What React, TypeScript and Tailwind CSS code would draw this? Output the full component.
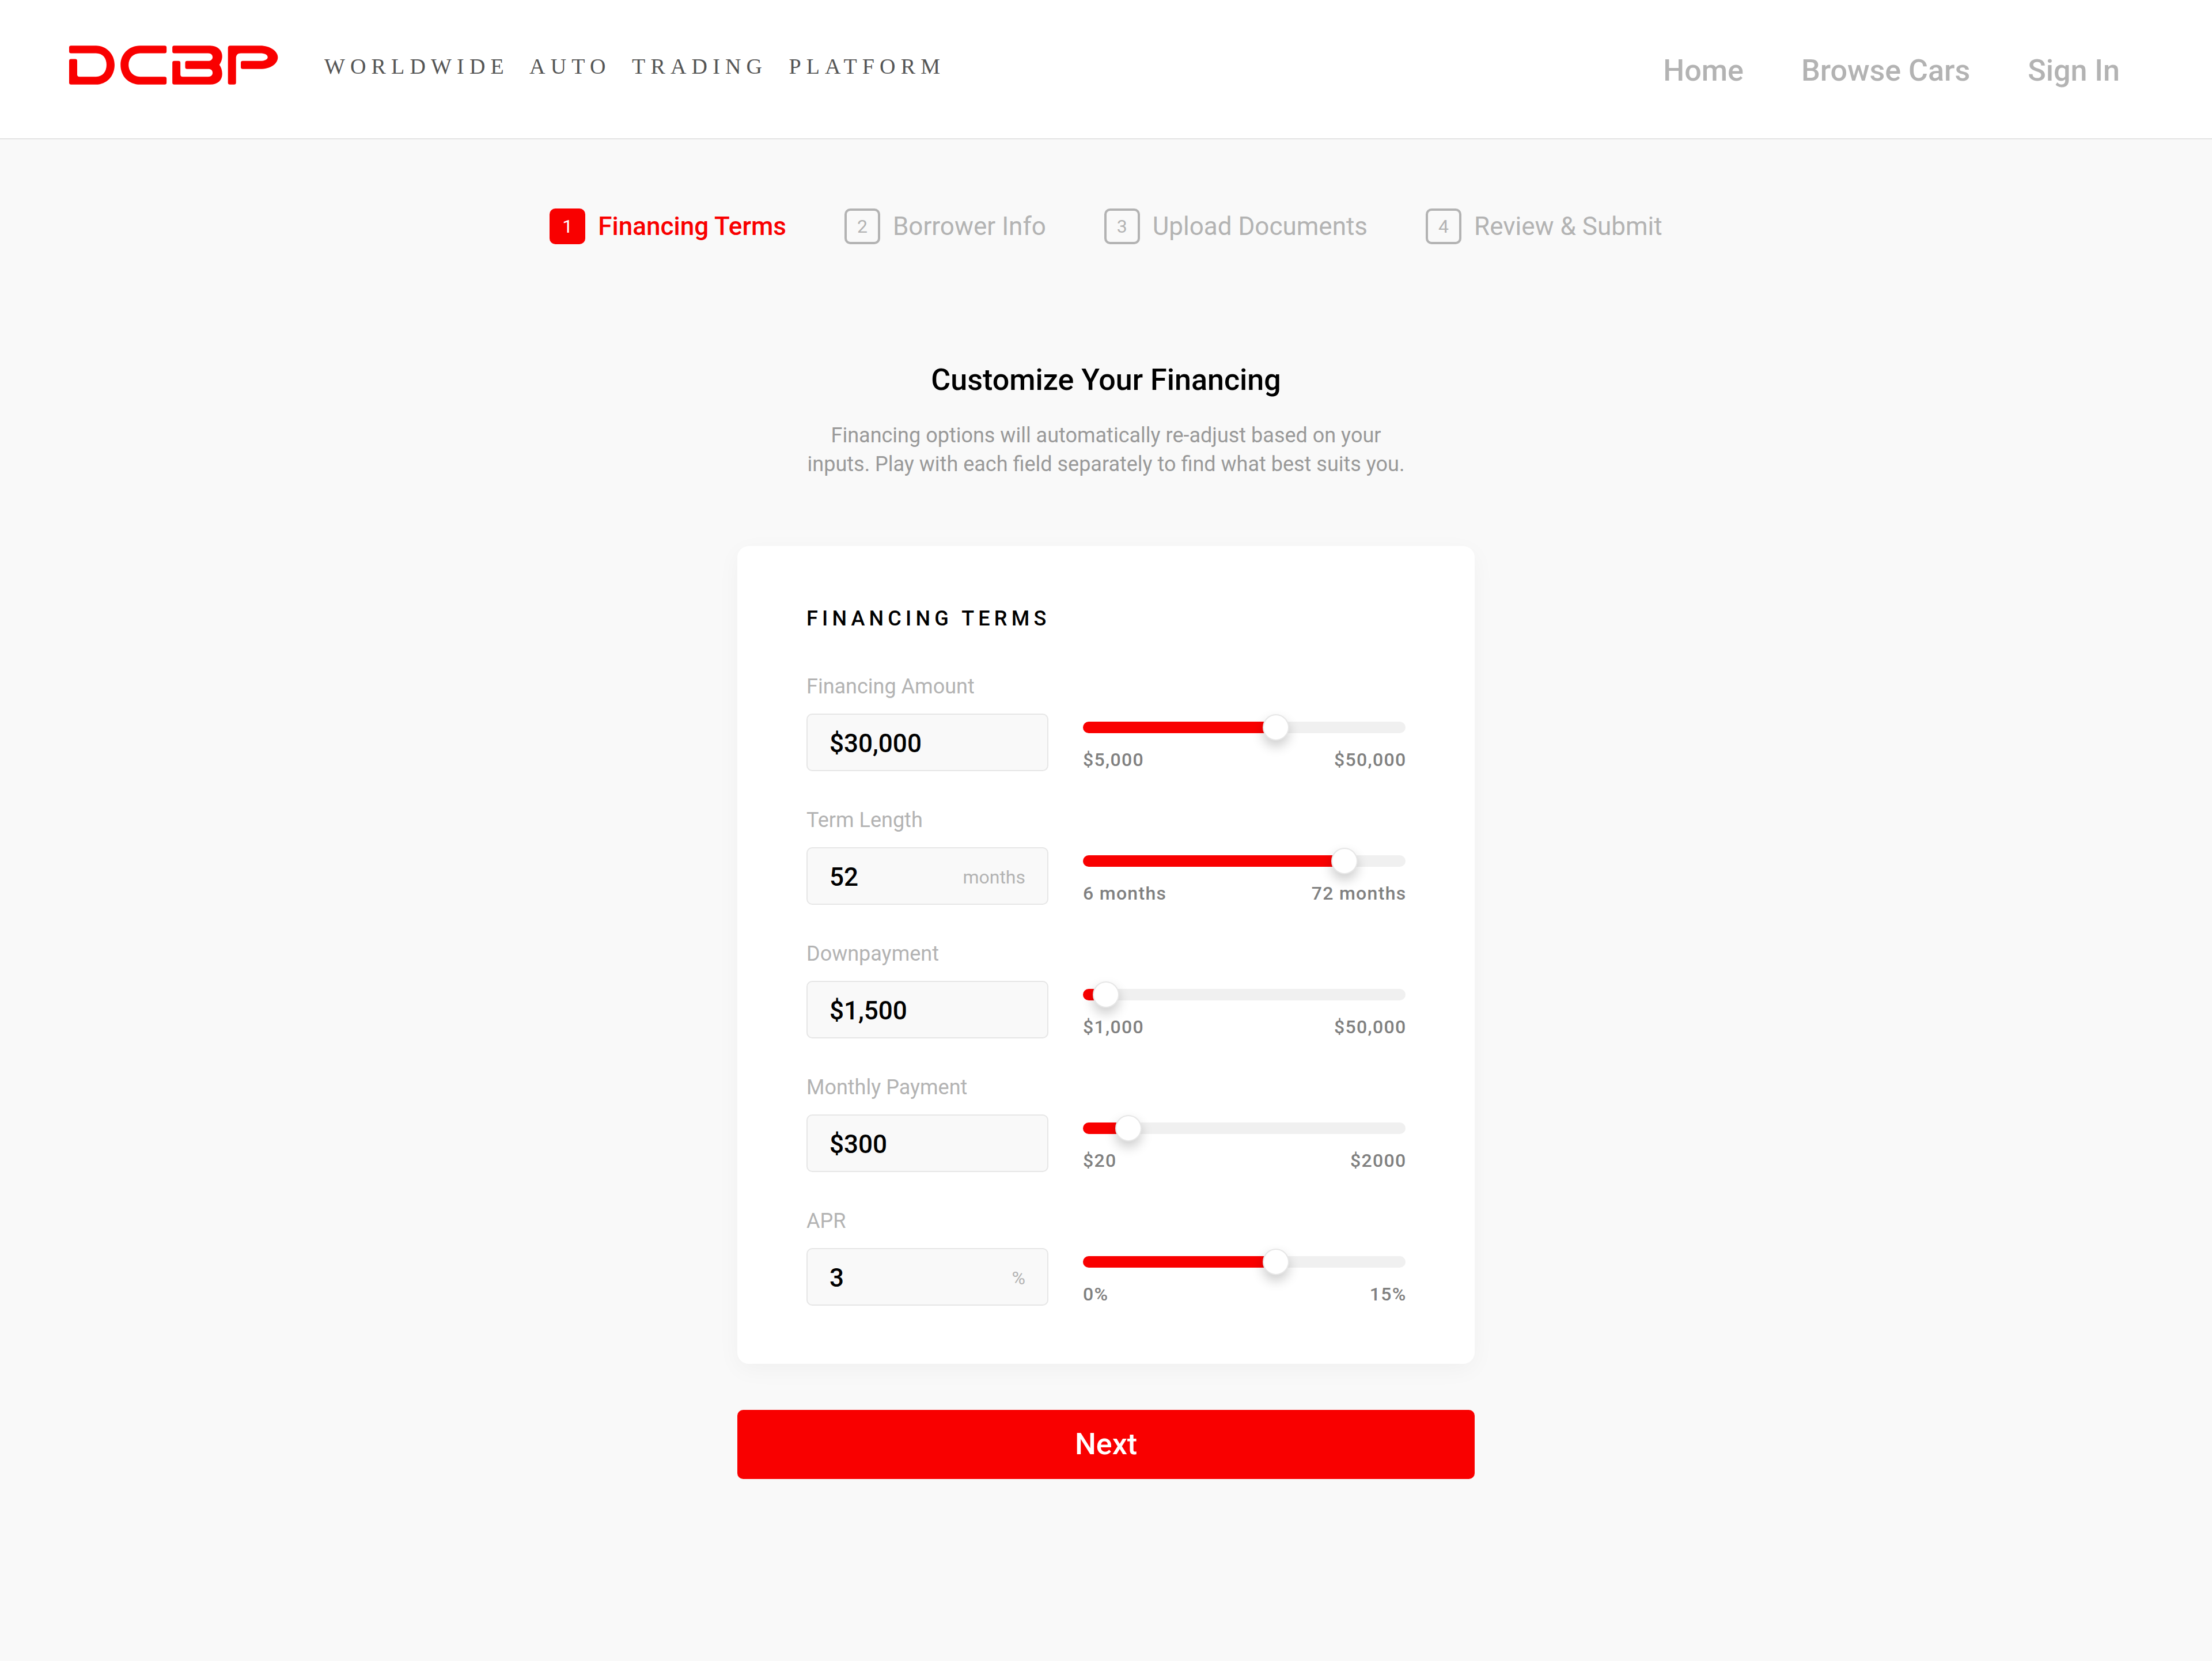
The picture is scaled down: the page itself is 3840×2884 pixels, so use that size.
const font = "font-['Roboto',sans-serif]";

const steps = [
  { n: 1, label: "Financing Terms", active: true },
  { n: 2, label: "Borrower Info" },
  { n: 3, label: "Upload Documents" },
  { n: 4, label: "Review & Submit" },
];

const rows = [
  { label: "Financing Amount", value: "$30,000", pct: 59.8, min: "$5,000", max: "$50,000" },
  { label: "Term Length", value: "52", unit: "months", pct: 81, min: "6 months", max: "72 months" },
  { label: "Downpayment", value: "$1,500", pct: 7.1, min: "$1,000", max: "$50,000" },
  { label: "Monthly Payment", value: "$300", pct: 14.1, min: "$20", max: "$2000" },
  { label: "APR", value: "3", unit: "%", pct: 59.8, min: "0%", max: "15%" },
];

const Logo = () => (
  <svg viewBox="90 90 1090 203" className="w-[363px] h-[68px] shrink-0" fill="#f90000">
    <path d="M100 90H230C285 90 327 135 327 190C327 250 285 293 230 293H100Q90 293 90 283V170Q90 160 100 160H122Q132 160 132 170V240Q132 252 144 252H230C265 252 285 225 285 190C285 155 265 130 230 130H100Q90 130 90 120V100Q90 90 100 90Z" />
    <path d="M588 90H460C400 90 358 135 358 190C358 250 400 293 460 293H588Q598 293 598 283V262Q598 252 588 252H460C425 252 400 225 400 190C400 155 425 130 460 130H588Q598 130 598 120V100Q598 90 588 90Z" />
    <path d="M638 90H825C865 90 888 115 888 145C888 165 880 180 873 190C880 200 888 215 888 238C888 270 865 293 825 293H638Q628 293 628 283V180Q628 170 638 170H660Q670 170 670 180V240Q670 252 682 252H815C830 252 838 243 838 232C838 220 830 212 815 212H705Q695 212 695 202V180Q695 170 705 170H815C830 170 838 160 838 150C838 140 830 130 815 130H638Q628 130 628 120V100Q628 90 638 90Z" />
    <path d="M930 90H1085C1140 90 1178 120 1178 150C1178 185 1140 212 1085 212H995Q985 212 985 202V180Q985 170 995 170H1085C1110 170 1125 162 1125 150C1125 138 1110 130 1085 130H985C968 130 960 140 960 155V283Q960 293 950 293H928Q918 293 918 283V102Q918 90 930 90Z" />
  </svg>
);

const Header = () => (
  <header className="flex h-[242px] items-center justify-between border-b-2 border-[#e3e3e3] bg-white pl-[120px] pr-[160px]">
    <div className="flex items-center gap-[80px] pb-[14px]">
      <Logo />
      <span className="pt-[4px] font-['Liberation_Serif',serif] text-[38px] leading-[50px] tracking-[9.15px] whitespace-pre text-[#555555]">
        {"WORLDWIDE  AUTO  TRADING  PLATFORM"}
      </span>
    </div>
    <nav className="flex gap-[100px] pt-[6px] text-[52px] leading-[60px] font-medium text-[#b3b3b3]">
      <a>Home</a>
      <a>Browse Cars</a>
      <a>Sign In</a>
    </nav>
  </header>
);

const Stepper = () => (
  <div className="flex justify-center gap-[101px] pt-[120px]">
    {steps.map((s) => (
      <div key={s.n} className="flex items-center gap-[22px]">
        <span
          className={
            s.active
              ? "flex h-[62px] w-[62px] items-center justify-center rounded-[10px] bg-[#f90000] text-[32px] text-white"
              : "flex h-[62px] w-[62px] items-center justify-center rounded-[10px] border-[4px] border-[#b3b3b3] text-[32px] text-[#b3b3b3]"
          }
        >
          {s.n}
        </span>
        <span
          className={
            s.active
              ? "text-[44px] leading-[62px] font-medium text-[#f90000]"
              : "text-[44px] leading-[62px] text-[#b3b3b3]"
          }
        >
          {s.label}
        </span>
      </div>
    ))}
  </div>
);

const Slider = ({ pct, min, max }: { pct: number; min: string; max: string }) => (
  <div className="w-[560px] pt-[14px]">
    <div className="relative h-[20px] rounded-full bg-[#f0f0f0]">
      <div className="h-full rounded-l-full bg-[#f90000]" style={{ width: `${pct}%` }} />
      <div
        className="absolute top-[-13px] ml-[-23px] h-[46px] w-[46px] rounded-full border-2 border-[#e6e6e6] bg-white shadow-[0_10px_20px_rgba(0,0,0,0.2)]"
        style={{ left: `${pct}%` }}
      />
    </div>
    <div className="mt-[26px] -mr-[1.5px] flex justify-between text-[32px] leading-[40px] font-medium tracking-[1.3px] text-[#808080]">
      <span>{min}</span>
      <span>{max}</span>
    </div>
  </div>
);

const Row = ({ row }: { row: (typeof rows)[number] }) => (
  <div>
    <div className="text-[36px] leading-[44px] text-[#b3b3b3]">{row.label}</div>
    <div className="mt-[25px] flex gap-[60px]">
      <div className="flex h-[100px] w-[420px] items-center justify-between rounded-[10px] border-2 border-[#e6e6e6] bg-[#f9f9f9] pt-[4px] pl-[38px] pr-[38px]">
        <span className="text-[44px] leading-[60px] font-medium text-black">{row.value}</span>
        {row.unit && <span className="text-[32px] text-[#b3b3b3]">{row.unit}</span>}
      </div>
      <Slider pct={row.pct} min={row.min} max={row.max} />
    </div>
  </div>
);

export default function App() {
  return (
    <div className={`${font} min-h-screen bg-[#f9f9f9]`}>
      <Header />
      <Stepper />
      <main className="mx-auto flex w-[1280px] flex-col items-center pt-[204px]">
        <h1 className="text-[52px] leading-[64px] font-medium text-black">Customize Your Financing</h1>
        <p className="mt-[39px] text-center text-[36px] leading-[50px] text-[#999999]">
          Financing options will automatically re-adjust based on your
          <br />
          inputs. Play with each field separately to find what best suits you.
        </p>
        <section className="mt-[117px] h-[1420px] w-full rounded-[20px] bg-white px-[120px] pt-[104px] shadow-[0_10px_40px_rgba(0,0,0,0.04)]">
          <h2 className="text-[36px] leading-[44px] font-medium tracking-[7.2px] text-black">FINANCING TERMS</h2>
          <div className="mt-[74px] flex flex-col gap-[63px]">
            {rows.map((r) => (
              <Row key={r.label} row={r} />
            ))}
          </div>
        </section>
        <button className="mt-[80px] h-[120px] w-full rounded-[10px] bg-[#f90000] text-[52px] font-medium text-white">
          Next
        </button>
      </main>
    </div>
  );
}
